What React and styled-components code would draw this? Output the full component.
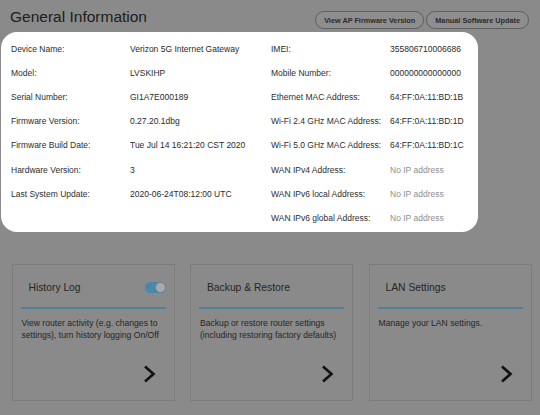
import React from "react";
import styled, { createGlobalStyle } from "styled-components";

const Global = createGlobalStyle`
  html, body {
    margin: 0;
    padding: 0;
    background: #8a8a8a;
    font-family: "Liberation Sans", Arial, sans-serif;
  }
`;

const info = [
  ["Device Name:", "Verizon 5G Internet Gateway", "IMEI:", "355806710006686"],
  ["Model:", "LVSKIHP", "Mobile Number:", "000000000000000"],
  ["Serial Number:", "GI1A7E000189", "Ethernet MAC Address:", "64:FF:0A:11:BD:1B"],
  ["Firmware Version:", "0.27.20.1dbg", "Wi-Fi 2.4 GHz MAC Address:", "64:FF:0A:11:BD:1D"],
  ["Firmware Build Date:", "Tue Jul 14 16:21:20 CST 2020", "Wi-Fi 5.0 GHz MAC Address:", "64:FF:0A:11:BD:1C"],
  ["Hardware Version:", "3", "WAN IPv4 Address:", "No IP address"],
  ["Last System Update:", "2020-06-24T08:12:00 UTC", "WAN IPv6 local Address:", "No IP address"],
  ["", "", "WAN IPv6 global Address:", "No IP address"],
];

const cards = [
  { title: "History Log", text: "View router activity (e.g. changes to settings), turn history logging On/Off", toggle: true },
  { title: "Backup & Restore", text: "Backup or restore router settings (including restoring factory defaults)" },
  { title: "LAN Settings", text: "Manage your LAN settings." },
];

function Chevron() {
  return (
    <svg width="14" height="18" viewBox="0 0 14 18">
      <polyline points="3,1.5 11.5,9 3,16.5" fill="none" stroke="#111" strokeWidth="2.6" />
    </svg>
  );
}

function App() {
  return (
    <>
      <Global />
      <Header>
        <Title>General Information</Title>
        <Actions>
          <Pill>View AP Firmware Version</Pill>
          <Pill>Manual Software Update</Pill>
        </Actions>
      </Header>

      <Panel>
        {info.map((r, i) => (
          <Row key={i}>
            <Label>{r[0]}</Label>
            <Value>{r[1]}</Value>
            <Label>{r[2]}</Label>
            <Value $muted={r[3] === "No IP address"}>{r[3]}</Value>
          </Row>
        ))}
      </Panel>

      <Cards>
        {cards.map((c) => (
          <Card key={c.title}>
            <CardHead>
              <CardTitle>{c.title}</CardTitle>
              {c.toggle && (
                <Toggle>
                  <Knob />
                </Toggle>
              )}
            </CardHead>
            <Rule />
            <CardText>{c.text}</CardText>
            <CardFoot>
              <Chevron />
            </CardFoot>
          </Card>
        ))}
      </Cards>
    </>
  );
}

export default App;

const Header = styled.div`
  height: 32px;
  display: flex;
  align-items: center;
  justify-content: space-between;
  padding: 0 11px 0 10px;
`;

const Title = styled.h1`
  margin: 2px 0 0;
  font-size: 15.5px;
  font-weight: 400;
  color: #1c1c1c;
`;

const Actions = styled.div`
  display: flex;
  gap: 2px;
  margin-top: 8px;
`;

const Pill = styled.button`
  height: 18px;
  padding: 0 8px;
  border: 1px solid #5f5f5f;
  border-radius: 9px;
  background: #8e8e8e;
  color: #2b2b2b;
  font-family: "Liberation Sans", Arial, sans-serif;
  font-size: 7.3px;
  font-weight: 700;
  white-space: nowrap;
`;

const Panel = styled.div`
  margin-left: 1px;
  width: 467px;
  background: #fff;
  border-radius: 16px;
  padding: 5px 0 2px 10px;
`;

const Row = styled.div`
  height: 24.1px;
  display: grid;
  grid-template-columns: 119px 141px 119px 1fr;
  align-items: center;
  font-size: 8.5px;
  color: #2d2d2d;
`;

const Label = styled.span`
  white-space: nowrap;
`;

const Value = styled.span`
  white-space: nowrap;
  color: ${(p) => (p.$muted ? "#8e8e8e" : "#2a2a2a")};
`;

const Cards = styled.div`
  display: grid;
  grid-template-columns: repeat(3, 163px);
  gap: 15.5px;
  padding: 32px 0 0 11.5px;
`;

const Card = styled.div`
  height: 137px;
  box-sizing: border-box;
  border: 1px solid #7c7c7c;
  display: flex;
  flex-direction: column;
  padding: 0 8px 0 8px;
`;

const CardHead = styled.div`
  height: 42px;
  display: flex;
  align-items: center;
  justify-content: space-between;
  padding: 4px 0 0 8px;
  box-sizing: border-box;
`;

const CardTitle = styled.span`
  font-size: 10.3px;
  color: #262626;
`;

const Toggle = styled.span`
  width: 21px;
  height: 11px;
  border-radius: 6px;
  background: #4a87a8;
  display: flex;
  align-items: center;
  justify-content: flex-end;
  padding: 0 1px;
  box-sizing: border-box;
`;

const Knob = styled.span`
  width: 9px;
  height: 9px;
  border-radius: 50%;
  background: #a9a9a9;
  box-shadow: 0 0 0 0.5px #8a8a8a;
`;

const Rule = styled.div`
  height: 2px;
  background: #4f809a;
`;

const CardText = styled.p`
  margin: 8px 0 0 1px;
  font-size: 8.6px;
  line-height: 12.4px;
  color: #262626;
`;

const CardFoot = styled.div`
  margin-top: auto;
  display: flex;
  justify-content: flex-end;
  padding: 0 10px 17px 0;
`;
